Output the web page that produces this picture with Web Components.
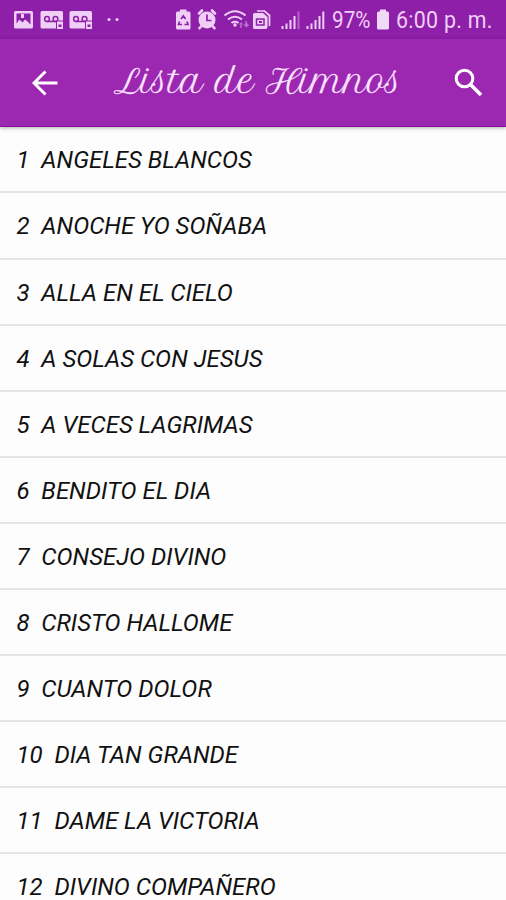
<!DOCTYPE html>
<html lang="es">
<head>
<meta charset="utf-8">
<title>Lista de Himnos</title>
<style>
html,body{margin:0;height:100%;overflow:hidden;background:#fdfdfd}
body{font-family:Roboto,"Noto Sans",sans-serif}
</style>
</head>
<body>
<hymn-app></hymn-app>
<script>
class StatusBar extends HTMLElement{
  constructor(){
    super();
    this.attachShadow({mode:'open'}).innerHTML=`
<style>
:host{display:flex;align-items:center;height:39px;background:#8d1fa9;color:#f0cff6;box-sizing:border-box;padding-left:13px;overflow:hidden}
svg{display:block;flex:none}
.t{font-size:23px;line-height:39px;white-space:pre;transform-origin:0 50%;flex:none;padding-top:1px}
.p{width:43px;transform:scaleX(.9);margin-left:6px}
.c{transform:scaleX(.93);margin-left:6px;letter-spacing:.3px}
</style>
<svg width="313" height="39" viewBox="13 0 313 39" fill="#f0cff6">
  <rect x="14" y="11" width="19" height="17.5" rx="1.5"/>
  <path fill="#8d1fa9" d="M16.500 13.500h14v11l-3-3-2.500-2-2.500 3-3-3-3 4z"/><path d="M21 14h3v4h-3z"/>
  <g id="tape">
    <path d="M41.500 11h20a1.500 1.500 0 0 1 1.500 1.500V28.500H42a1.500 1.500 0 0 1-1.500-1.500V12.500z"/>
    <g fill="none" stroke="#8d1fa9" stroke-width="1.500"><circle cx="47" cy="19" r="2.400"/><circle cx="55.500" cy="19" r="2.400"/><path d="M47 21.500h9"/></g>
    <path fill="#f0cff6" stroke="#8d1fa9" d="M56.500 21h7v8.500h-7z"/><path fill="#8d1fa9" d="M58.500 24.500h3v2.500h-3z"/>
  </g>
  <use href="#tape" x="29"/>
  <circle cx="109" cy="19.500" r="1.600"/><circle cx="117" cy="19.500" r="1.600"/>
  <path d="M180 9.500h6.500v2h2.500a1.500 1.500 0 0 1 1.500 1.500v15a1.500 1.500 0 0 1-1.500 1.500h-11.500A1.500 1.500 0 0 1 176 28V13a1.500 1.500 0 0 1 1.500-1.500H180z"/>
  <path fill="none" stroke="#8d1fa9" stroke-width="1.700" d="M181 19l2.300-3 2.300 3M187 21.500l1 3h-3.500M182 24.500h-3.500l1-3"/>
  <circle cx="207" cy="20" r="8.500"/><path stroke="#f0cff6" stroke-width="2.600" stroke-linecap="round" d="M199 13.500l3-3M215 13.500l-3-3M201.500 26l-2 2.200M212.500 26l2 2.200"/>
  <path fill="none" stroke="#8d1fa9" stroke-width="1.700" d="M207 14.500v6h4.500"/>
  <g fill="none" stroke="#f0cff6" stroke-width="2.100"><path d="M224.500 15.500q10.500-8.500 21 0M228 19.500q7-5.500 14 0M231.500 23q3.500-2.500 7 0"/></g>
  <circle cx="235" cy="25" r="1.700"/>
  <path opacity=".45" d="M239 24.500l2-2.500 2 2.500h-1.200v3.500h-1.600v-3.500zM243.500 25l2-2v-2h1.500v2l2 2-2.500 2.500z"/>
  <path fill="none" stroke="#f0cff6" stroke-width="1.700" d="M257 11h7.500l5 4.500V26"/>
  <path d="M254 13h9l4.500 4V27a2 2 0 0 1-2 2H254.500a1.500 1.500 0 0 1-1.500-1.500V14z"/>
  <path fill="none" stroke="#8d1fa9" stroke-width="1.500" d="M256.500 19h7.500v6h-7.500z"/><path fill="#8d1fa9" d="M259 21h3v2h-3z"/>
  <g id="sig"><path d="M281.500 26h2v3h-2zM285.500 23.500h2v5.500h-2zM289.500 20h2v9h-2zM293.500 16h2v13h-2z"/></g>
  <path opacity=".4" d="M297.500 11.500h2v17.500h-2z"/>
  <use href="#sig" x="25"/><path d="M322.300 11.500h2v17.500h-2z"/>
</svg>
<span class="t p">97%</span>
<svg width="14" height="39" viewBox="0 0 14 39" fill="#f0d9f5" style="margin-left:1px"><path d="M4 9.500h6v2h1.500A1.500 1.500 0 0 1 13 13v15a1.500 1.500 0 0 1-1.500 1.500h-9A1.500 1.500 0 0 1 1 28V13a1.500 1.500 0 0 1 1.500-1.500H4z"/></svg>
<span class="t c">6:00 p. m.</span>`;
  }
}
class AppToolbar extends HTMLElement{
  constructor(){
    super();
    this.attachShadow({mode:'open'}).innerHTML=`
<style>
:host{display:flex;align-items:center;height:88px;box-sizing:border-box;padding:0 22px 0 31px;background:#9c27b0;border-bottom:1px solid #84109b;box-shadow:0 1px 4px rgba(0,0,0,.32);color:#fbe5ff;position:relative}
svg{display:block;flex:none}
h1{flex:1;margin:0 0 2px 55px;font:400 31.600px/50px "Petit Formal Script","Liberation Serif",serif;white-space:nowrap;-webkit-text-stroke:.3px #fbe5ff}
</style>
<svg width="28" height="28" viewBox="0 0 28 28" fill="none" stroke="#fff" stroke-width="2.900"><path d="M26.500 14H3.500M14.500 2.500L3 14l11.500 11.500"/></svg>
<h1><slot></slot></h1>
<svg width="30" height="30" viewBox="0 0 30 30" fill="none" stroke="#fff"><circle cx="10.500" cy="10.500" r="8.300" stroke-width="3"/><path stroke-width="3.600" d="M16 16l11 11"/></svg>`;
  }
}
class HymnRow extends HTMLElement{
  constructor(){
    super();
    this.attachShadow({mode:'open'}).innerHTML=`<style>
:host{display:block;height:66.100px;box-sizing:border-box;padding:1px 16.500px 0;border-bottom:2px solid #e5e5e5;font-size:24px;line-height:65px;font-style:italic;color:#111;white-space:pre}
</style><slot></slot>`;
  }
}
class HymnApp extends HTMLElement{
  constructor(){
    super();
    const hymns=['ANGELES BLANCOS','ANOCHE YO SOÑABA','ALLA EN EL CIELO','A SOLAS CON JESUS','A VECES LAGRIMAS','BENDITO EL DIA','CONSEJO DIVINO','CRISTO HALLOME','CUANTO DOLOR','DIA TAN GRANDE','DAME LA VICTORIA','DIVINO COMPAÑERO'];
    this.attachShadow({mode:'open'}).innerHTML=`
<style>
:host{display:flex;flex-direction:column;height:100vh;overflow:hidden;background:#fdfdfd}
status-bar,app-toolbar{flex:none}
main{flex:1;min-height:0;overflow:hidden;padding-top:.4px}
</style>
<status-bar></status-bar>
<app-toolbar>Lista de Himnos</app-toolbar>
<main>${hymns.map((h,i)=>`<hymn-row>${i+1}  ${h}</hymn-row>`).join('')}</main>`;
  }
}
customElements.define('status-bar',StatusBar);
customElements.define('app-toolbar',AppToolbar);
customElements.define('hymn-row',HymnRow);
customElements.define('hymn-app',HymnApp);
</script>
</body>
</html>
